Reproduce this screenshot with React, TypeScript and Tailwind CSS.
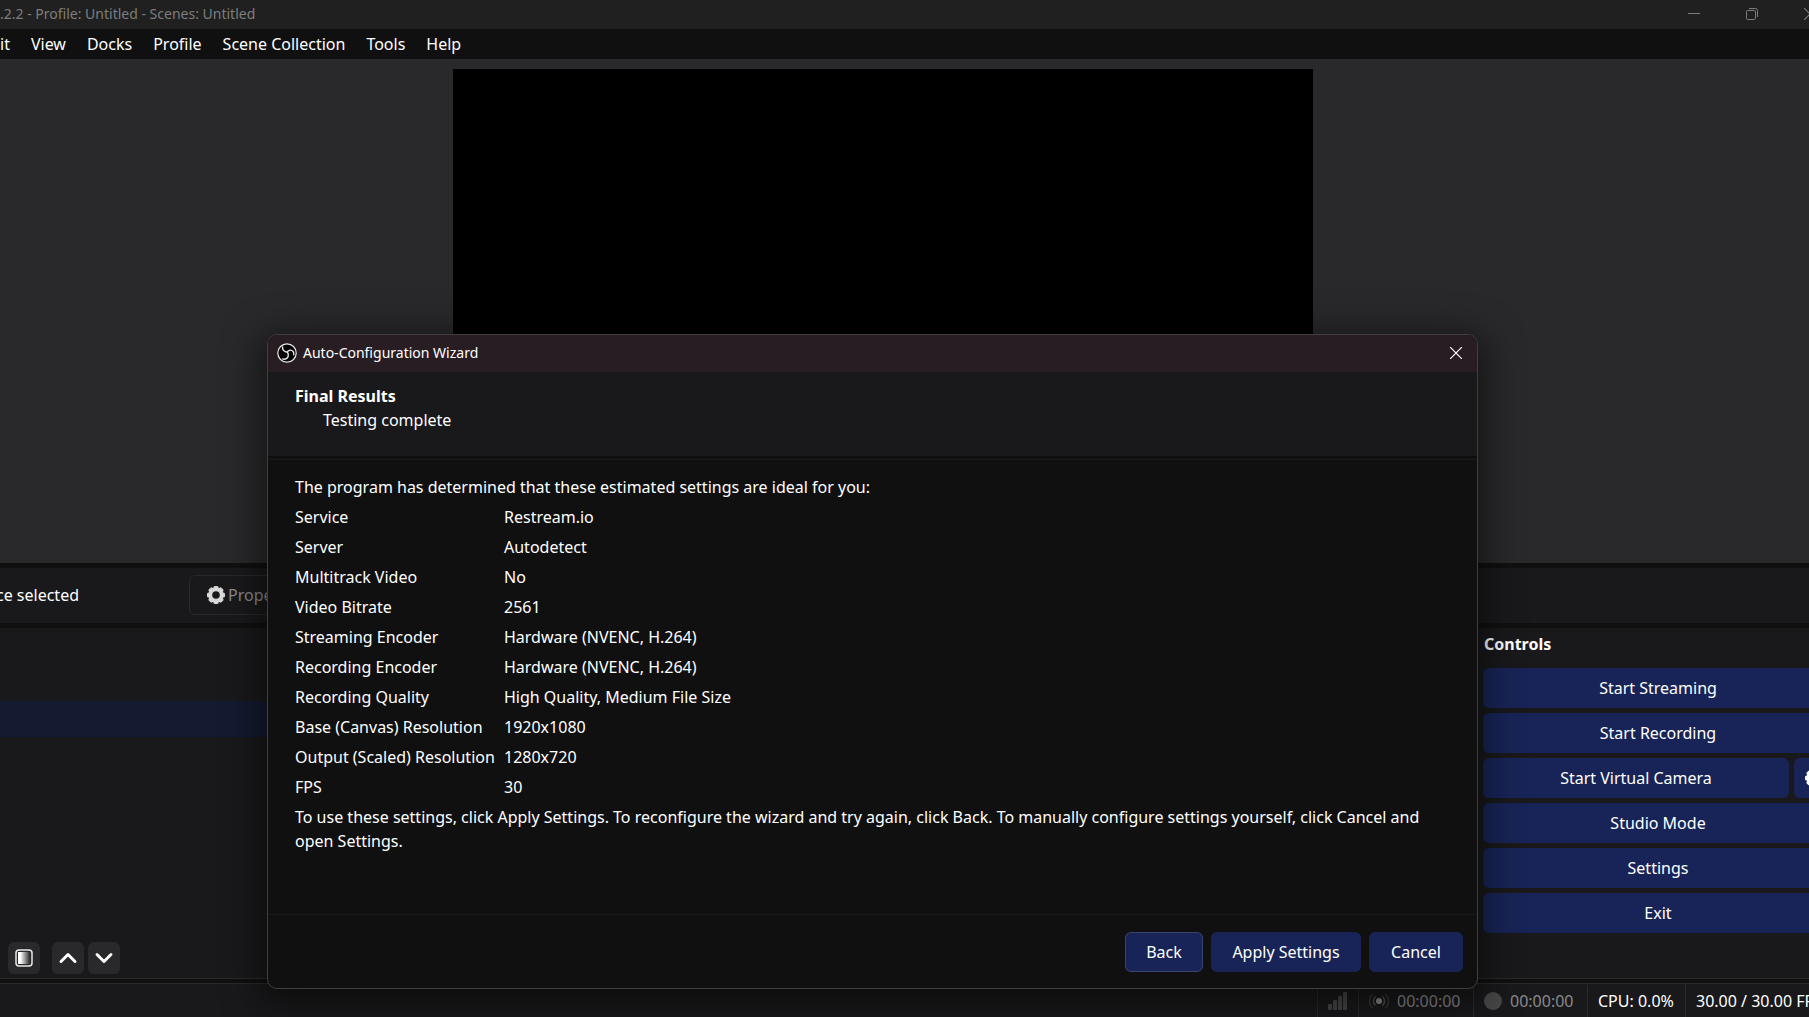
import { ChevronDown, ChevronUp } from 'lucide-react';

const menuItems = ['it', 'View', 'Docks', 'Profile', 'Scene Collection', 'Tools', 'Help'];

const results = [
  ['Service', 'Restream.io'],
  ['Server', 'Autodetect'],
  ['Multitrack Video', 'No'],
  ['Video Bitrate', '2561'],
  ['Streaming Encoder', 'Hardware (NVENC, H.264)'],
  ['Recording Encoder', 'Hardware (NVENC, H.264)'],
  ['Recording Quality', 'High Quality, Medium File Size'],
  ['Base (Canvas) Resolution', '1920x1080'],
  ['Output (Scaled) Resolution', '1280x720'],
  ['FPS', '30'],
];

function Gear({ className }: { className: string }) {
  return (
    <svg viewBox="0 0 20 20" className={className} fill="currentColor" aria-hidden="true">
      {[0, 45, 90, 135, 180, 225, 270, 315].map(a => (
        <rect key={a} x="7.4" y="1" width="5.2" height="4.5" rx="1.6" transform={`rotate(${a} 10 10)`} />
      ))}
      <circle cx="10" cy="10" r="5.7" fill="none" stroke="currentColor" strokeWidth="3.8" />
    </svg>
  );
}

function ObsLogo() {
  return (
    <svg viewBox="0 0 20 20" className="size-5" fill="none" stroke="#e8e8e8" aria-hidden="true">
      <circle cx="10" cy="10" r="9.2" fill="#000" strokeWidth="1.2" />
      <path
        d="M5.6 3.4C5 6.600 7 9 10.400 9.200M16.600 12.400C17.500 9.400 15.600 6.800 12.800 7.200C11.300 7.500 10.500 8.300 10.400 9.200M5.200 15.600C8 17.200 11.200 15.400 11.300 12.400C11.300 11 11 10 10.400 9.200"
        strokeWidth="1.4"
      />
    </svg>
  );
}

function CloseIcon() {
  return (
    <svg viewBox="0 0 12 12" className="size-3" stroke="currentColor" strokeWidth="1.2" aria-hidden="true">
      <path d="M0 0l12 12M12 0L0 12" />
    </svg>
  );
}

function ControlButton({ label }: { label: string }) {
  return <button className="h-10 flex-1 rounded-md bg-[#182457]">{label}</button>;
}

function TitleBar() {
  return (
    <header className="flex h-[29px] items-center justify-between overflow-hidden bg-[#202020] pb-px text-[#7d7d7d]">
      <span className="whitespace-nowrap text-sm">.2.2 - Profile: Untitled - Scenes: Untitled</span>
      <div className="-mr-[7px] flex shrink-0 items-center gap-[46px]">
        <button aria-label="Minimize">
          <svg viewBox="0 0 12 12" className="size-3" stroke="currentColor"><path d="M0 5.5h12" /></svg>
        </button>
        <button aria-label="Restore">
          <svg viewBox="0 0 12 12" className="size-3" fill="none" stroke="currentColor">
            <rect x="0.5" y="2.5" width="9" height="9" rx="1" />
            <path d="M3 0.5h6.500a2 2 0 0 1 2 2V9" />
          </svg>
        </button>
        <button aria-label="Close"><CloseIcon /></button>
      </div>
    </header>
  );
}

function StatusBar() {
  return (
    <footer className="flex h-[34px] justify-end overflow-hidden whitespace-nowrap border-t border-[#2a2a2b] bg-[#19191b] pt-px text-white">
      <div className="flex w-[41px] items-center justify-center border-l border-[#2a2a2b]">
        <svg viewBox="0 0 20 18" className="h-[18px] w-5 text-[#464648]" fill="currentColor">
          <rect x="0" y="12" width="4" height="6" rx="1" />
          <rect x="5" y="8" width="4" height="10" rx="1" />
          <rect x="10" y="4" width="4" height="14" rx="1" />
          <rect x="15" y="0" width="4" height="18" rx="1" />
        </svg>
      </div>
      <div className="flex w-[115px] items-center gap-2 border-l border-[#2a2a2b] pl-[10px] text-[#8a8a8c]">
        <svg viewBox="0 0 20 18" className="h-[18px] w-5" fill="none" stroke="#505052" strokeWidth="1.5">
          <circle cx="10" cy="9" r="3" fill="#8a8a8c" stroke="none" />
          <path d="M6.5 4.500a6 6 0 0 0 0 9M13.5 4.500a6 6 0 0 1 0 9" />
          <path d="M3.5 2a9.500 9.500 0 0 0 0 14M16.5 2a9.500 9.500 0 0 1 0 14" stroke="#343436" />
        </svg>
        00:00:00
      </div>
      <div className="flex w-[114px] items-center gap-2 border-l border-[#2a2a2b] pl-[10px] text-[#8a8a8c]">
        <span className="size-[18px] rounded-full bg-[#484849]" />
        00:00:00
      </div>
      <div className="flex w-[98px] items-center border-l border-[#2a2a2b] pl-[10px]">CPU: 0.0%</div>
      <div className="flex w-[124px] items-center border-l border-[#2a2a2b] pl-[10px]">30.00 / 30.00 FPS</div>
    </footer>
  );
}

function Wizard() {
  return (
    <section
      role="dialog"
      aria-label="Auto-Configuration Wizard"
      className="absolute left-[267px] right-[331px] top-[334px] overflow-hidden rounded-[10px] border border-[#3f3f40] bg-[#101010] text-white shadow-[0_8px_36px_8px_rgba(0,0,0,0.5)]"
    >
      <div className="flex h-[37px] items-center bg-[#281d23] pb-px pl-[9px] pr-[15px]">
        <ObsLogo />
        <span className="ml-[6px] text-sm">Auto-Configuration Wizard</span>
        <button aria-label="Close" className="ml-auto"><CloseIcon /></button>
      </div>
      <div className="h-[84px] bg-[#19191b] px-[27px] pt-3">
        <h1 className="font-bold">Final Results</h1>
        <p className="pl-7">Testing complete</p>
      </div>
      <div className="h-1 border-b border-t border-b-[#1a1a1b] border-t-[#0d0d0d]" />
      <div className="min-h-[454px] px-[27px] pt-[15px]">
        <p>The program has determined that these estimated settings are ideal for you:</p>
        <table className="mt-[3px] text-left">
          <tbody>
            {results.map(([name, value]) => (
              <tr key={name} className="h-[30px]">
                <th scope="row" className="w-[209px] whitespace-nowrap p-0 font-normal">{name}</th>
                <td className="p-0">{value}</td>
              </tr>
            ))}
          </tbody>
        </table>
        <p className="mt-[3px]">
          To use these settings, click Apply Settings. To reconfigure the wizard and try again, click Back. To manually
          configure settings yourself, click Cancel and open Settings.
        </p>
      </div>
      <div className="flex h-[74px] items-start justify-end gap-2 border-t border-[#19191a] pr-[14px] pt-[17px]">
        <button className="h-10 w-[78px] rounded-md border border-[#3a4470] bg-[#182457]">Back</button>
        <button className="h-10 w-[150px] rounded-md bg-[#182457]">Apply Settings</button>
        <button className="h-10 w-[94px] rounded-md bg-[#182457]">Cancel</button>
      </div>
    </section>
  );
}

export default function App() {
  return (
    <div className="relative flex min-h-screen flex-col overflow-hidden bg-[#101010] font-['Noto_Sans','Open_Sans',sans-serif] text-base leading-6 text-white">
      <TitleBar />
      <nav className="flex h-[30px] items-center gap-[21px] bg-[#101010]">
        {menuItems.map(item => (
          <button key={item}>{item}</button>
        ))}
      </nav>

      <main className="flex h-[504px] justify-center bg-[#29292b] py-[10px] pr-[43px]">
        <div className="aspect-video h-full bg-black" />
      </main>

      <div className="mt-[5px] flex h-[55px] items-center overflow-hidden bg-[#19191b] pb-px">
        <div className="flex w-[79px] justify-end whitespace-nowrap">ce selected</div>
        <button className="ml-[110px] flex h-10 items-center gap-[2px] rounded-md border border-[#28282a] px-4 text-[#8a8a8c]">
          <Gear className="size-5 text-[#d8d8d8]" />
          Properties
        </button>
      </div>

      <div className="mt-[5px] flex flex-1 justify-between overflow-hidden border-b border-[#2a2a2b] bg-[#19191b]">
        <div className="flex w-[300px] flex-col">
          <div className="mt-[73px] h-9 bg-[#141a30]" />
          <div className="mb-1 mt-auto flex items-center pl-2">
            <button aria-label="Filters" className="flex size-8 items-center justify-center rounded-md bg-[#29292b]">
              <svg viewBox="0 0 18 18" className="size-[18px]">
                <defs>
                  <linearGradient id="fade">
                    <stop offset="0.2" stopColor="#fff" />
                    <stop offset="1" stopColor="#29292b" />
                  </linearGradient>
                </defs>
                <rect x="1" y="1" width="16" height="16" rx="3" fill="none" stroke="#e8e8e8" strokeWidth="1.5" />
                <rect x="3" y="3" width="12" height="12" fill="url(#fade)" />
              </svg>
            </button>
            <button aria-label="Move up" className="ml-3 flex size-8 items-center justify-center rounded-md bg-[#29292b]">
              <ChevronUp size={28} strokeWidth={2.5} />
            </button>
            <button aria-label="Move down" className="ml-1 flex size-8 items-center justify-center rounded-md bg-[#29292b]">
              <ChevronDown size={28} strokeWidth={2.5} />
            </button>
          </div>
        </div>

        <aside className="-mr-6 w-[350px] shrink-0">
          <h2 className="flex h-10 items-center pb-2 pl-px font-bold">Controls</h2>
          <div className="flex flex-col gap-[5px]">
            <div className="flex"><ControlButton label="Start Streaming" /></div>
            <div className="flex"><ControlButton label="Start Recording" /></div>
            <div className="flex gap-[5px]">
              <ControlButton label="Start Virtual Camera" />
              <button aria-label="Configure virtual camera" className="flex h-10 w-[39px] items-center justify-center rounded-md bg-[#182457]">
                <Gear className="size-5" />
              </button>
            </div>
            <div className="flex"><ControlButton label="Studio Mode" /></div>
            <div className="flex"><ControlButton label="Settings" /></div>
            <div className="flex"><ControlButton label="Exit" /></div>
          </div>
        </aside>
      </div>

      <div className="h-1" />
      <StatusBar />
      <Wizard />
    </div>
  );
}
